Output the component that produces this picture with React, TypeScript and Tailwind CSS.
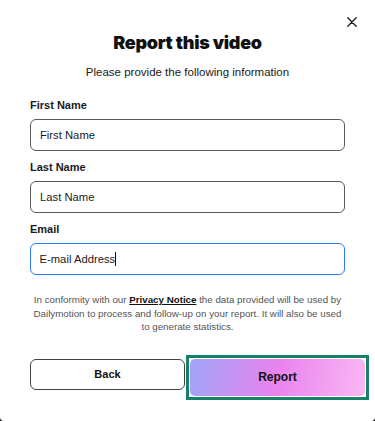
import React from "react";

const Field = ({ label, placeholder }: { label: string; placeholder: string }) => (
  <label className="flex flex-col">
    <span className="text-[11px] font-bold leading-[16px] text-[#1a1a1a] mb-[6px]">{label}</span>
    <input
      className="h-[32px] w-full rounded-[6px] border border-[#5a5a5a] px-[9px] text-[11.25px] text-[#1a1a1a] placeholder:text-[#1a1a1a] outline-none"
      placeholder={placeholder}
      readOnly
    />
  </label>
);

export default function App() {
  return (
    <div className="w-[375px] h-[421px] bg-[#111]" style={{ fontFamily: '"Liberation Sans", Arial, sans-serif' }}>
      <div className="relative h-full bg-white rounded-b-[4px] pt-[31px]">
        <button className="absolute top-[17px] right-[18px] w-[10px] h-[10px] text-[#222]" aria-label="Close">
          <svg viewBox="0 0 10 10" width="10" height="10" fill="none" stroke="currentColor" strokeWidth="1.4" strokeLinecap="round">
            <path d="M0.8 0.8L9.2 9.2M9.2 0.8L0.8 9.2" />
          </svg>
        </button>

        <h1
          className="text-center text-[18px] font-black leading-[24px] tracking-[-0.3px] text-[#111]"
          style={{ fontFamily: "Inter, sans-serif" }}
        >
          Report this video
        </h1>
        <p className="mt-[9px] text-center text-[11.5px] leading-[16px] text-[#1a1a1a]">
          Please provide the following information
        </p>

        <div className="mt-[17px] px-[30px] flex flex-col gap-[8px]">
          <Field label="First Name" placeholder="First Name" />
          <Field label="Last Name" placeholder="Last Name" />
          <label className="flex flex-col">
            <span className="text-[11px] font-bold leading-[16px] text-[#1a1a1a] mb-[6px]">Email</span>
            <div className="h-[32px] w-full rounded-[6px] border-[1.5px] border-[#2f7bf5] px-[8.5px] flex items-center text-[11.25px] text-[#1a1a1a]">
              E-mail Address<span className="inline-block w-[1px] h-[14px] bg-[#111]" />
            </div>
          </label>
        </div>

        <p className="mt-[18px] mx-auto w-[316px] text-center text-[9.75px] leading-[13.5px] text-[#555]">
          In conformity with our{" "}
          <a className="font-bold text-[#111] underline">Privacy Notice</a> the data provided will be used by
          Dailymotion to process and follow-up on your report. It will also be used to generate statistics.
        </p>

        <div className="mt-[21.5px] pl-[30px] flex items-start gap-[1px]">
          <button className="mt-[4px] w-[155px] h-[31px] rounded-[6px] border border-[#444] bg-white text-[11px] font-bold text-[#111]">
            Back
          </button>
          <div className="border-[3px] border-[#17806a] p-[1px] bg-white">
            <button className="block w-[175px] h-[37px] rounded-[5px] bg-[linear-gradient(100deg,#9fa4f8_0%,#e983ee_50%,#f9b8f4_100%)] pb-[2px] text-[12px] font-bold text-[#111]">
              Report
            </button>
          </div>
        </div>
      </div>
    </div>
  );
}
